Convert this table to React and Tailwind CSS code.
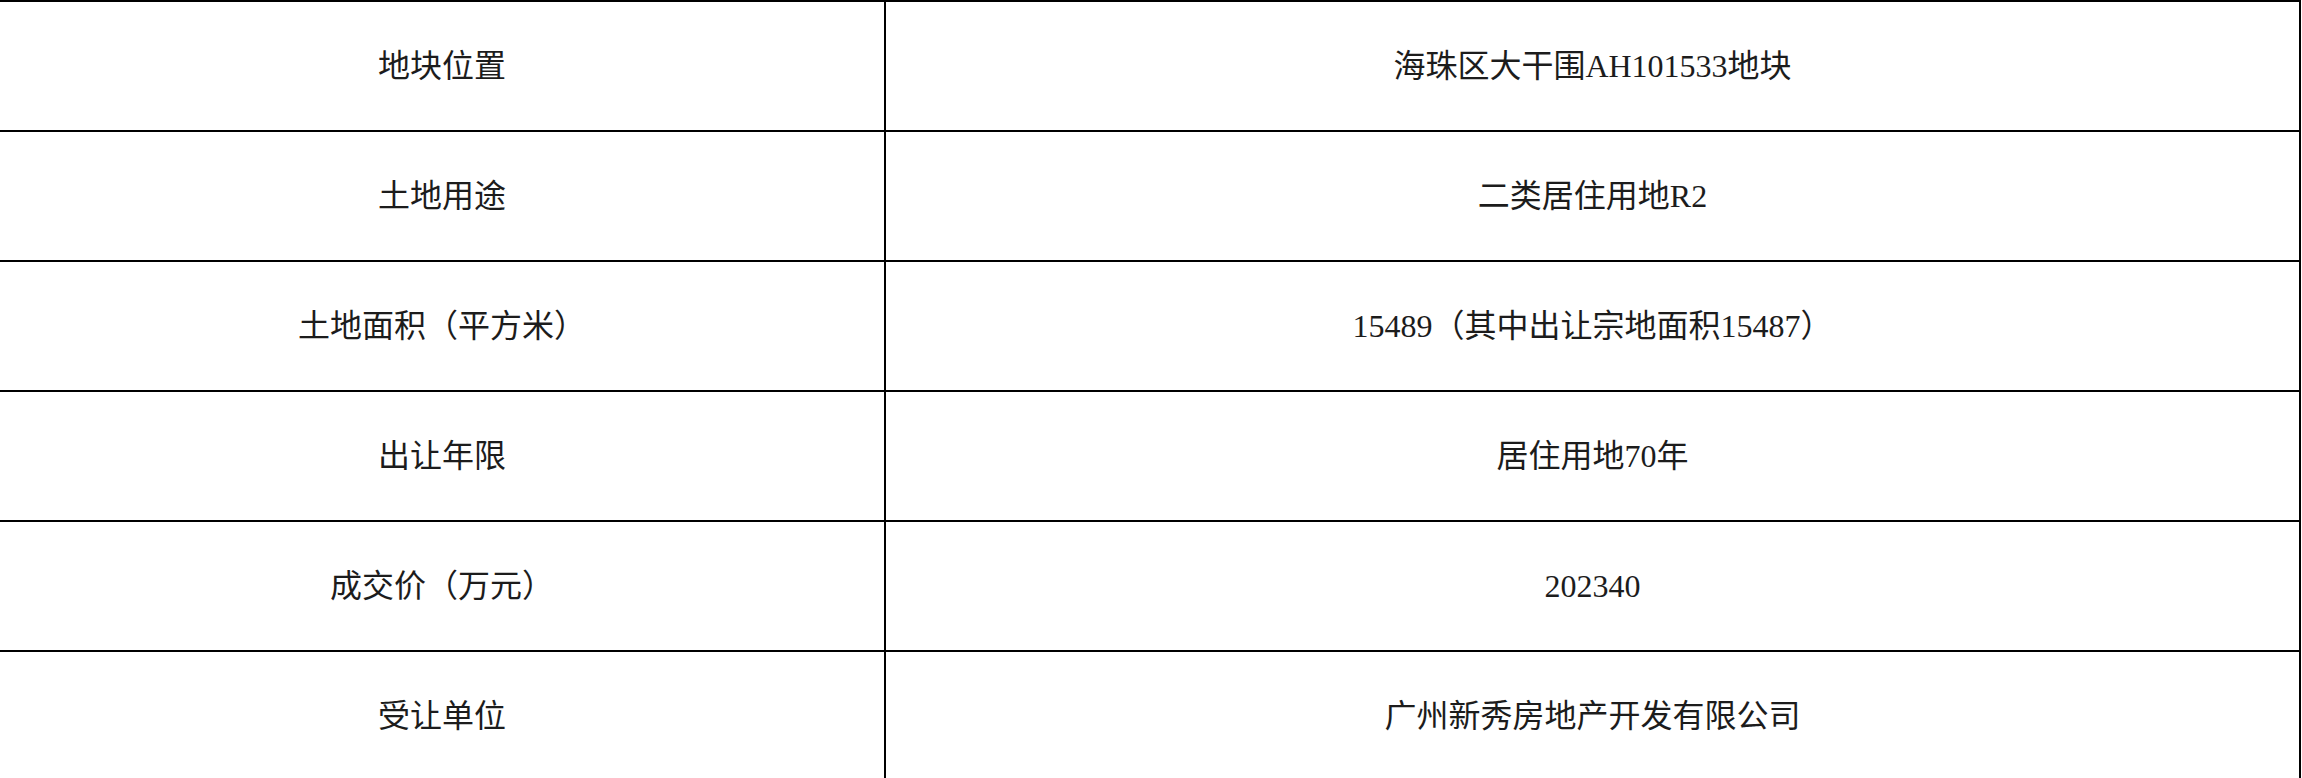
import React from 'react'

const rows = [
  ['地块位置', '海珠区大干围AH101533地块'],
  ['土地用途', '二类居住用地R2'],
  ['土地面积（平方米）', '15489（其中出让宗地面积15487）'],
  ['出让年限', '居住用地70年'],
  ['成交价（万元）', '202340'],
  ['受让单位', '广州新秀房地产开发有限公司'],
]

const App = () => {
  return (
    <div
      className="w-[2301px] h-[778px] overflow-hidden bg-white text-[#1c1c1c] text-[32px] leading-none"
      style={{ fontFamily: '"Liberation Serif", "Noto Sans CJK SC", serif' }}
    >
      <div className="border-t-2 border-r-2 border-black">
        {rows.map(([label, value]) => (
          <div key={label} className="flex h-[130px] border-b-2 border-black">
            <div className="w-[886px] shrink-0 flex items-center justify-center border-r-2 border-black">
              {label}
            </div>
            <div className="flex-1 flex items-center justify-center">
              {value}
            </div>
          </div>
        ))}
      </div>
    </div>
  )
}

export default App
